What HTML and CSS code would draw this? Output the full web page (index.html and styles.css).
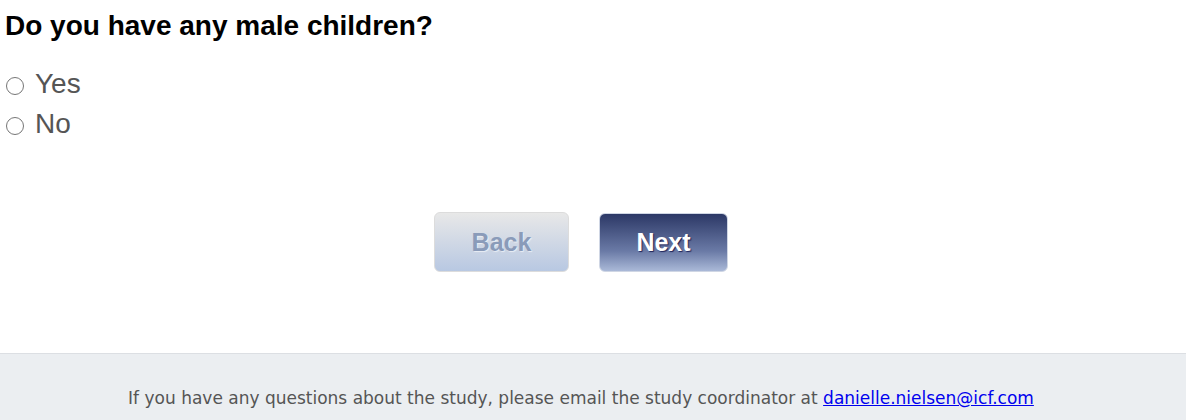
FILE: index.html
```html
<!DOCTYPE html>
<html lang="en">
<head>
<meta charset="utf-8">
<title>Survey</title>
<link rel="stylesheet" href="styles.css">
</head>
<body>
<main class="page">
  <h1 class="question">Do you have any male children?</h1>
  <div class="options">
    <label class="option"><input type="radio" name="male" class="radio"><span>Yes</span></label>
    <label class="option"><input type="radio" name="male" class="radio"><span>No</span></label>
  </div>
  <div class="nav">
    <button class="btn btn-back" type="button">Back</button>
    <button class="btn btn-next" type="button">Next</button>
  </div>
</main>
<footer class="footer">
  <p class="footer-text">If you have any questions about the study, please email the study coordinator at <a href="#" class="mail">danielle.nielsen@icf.com</a></p>
</footer>
</body>
</html>
```
FILE: styles.css
```css
html, body {
  margin: 0;
  padding: 0;
  background: #fff;
}
body {
  font-family: "Liberation Sans", Arial, sans-serif;
}
.page {
  padding: 0 24px 0 5px;
  height: 353px;
  box-sizing: border-box;
  display: flex;
  flex-direction: column;
}
.question {
  margin: 10px 0 0;
  font-size: 28px;
  line-height: 32px;
  font-weight: bold;
  color: #000;
}
.options {
  margin-top: 22px;
  display: flex;
  flex-direction: column;
}
.option {
  display: flex;
  align-items: center;
  gap: 11px;
  font-size: 28px;
  line-height: 40px;
  color: #555;
}
.radio {
  appearance: none;
  -webkit-appearance: none;
  margin: 4px 0 0 1px;
  width: 18px;
  height: 18px;
  border: 1px solid #767676;
  border-radius: 50%;
  box-sizing: border-box;
  background: #fff;
}
.nav {
  margin-top: 68px;
  display: flex;
  justify-content: center;
  gap: 30px;
  padding-right: 5px;
}
.btn {
  font-family: "Liberation Sans", Arial, sans-serif;
  font-size: 25px;
  font-weight: bold;
  border-radius: 6px;
  height: 60px;
  box-sizing: border-box;
  padding: 0;
}
.btn-back {
  width: 135px;
  color: #8a9bb9;
  border: 1px solid #dcdcdc;
  background: linear-gradient(#e8e8e8, #b8c8e2);
  text-shadow: 1px 1px 1px rgba(255,255,255,0.6);
}
.btn-next {
  width: 129px;
  margin-top: 1px;
  height: 59px;
  color: #fff;
  border: 1px solid #cfd6e4;
  background: linear-gradient(#2c3866, #6a7aa6 65%, #aab9d8);
  text-shadow: 1px 1px 1px rgba(0,0,60,0.7);
}
.footer {
  background: #ebeef1;
  border-top: 1px solid #dcdfe3;
  height: 67px;
  box-sizing: border-box;
  padding-right: 24px;
}
.footer-text {
  margin: 0;
  padding-top: 33px;
  text-align: center;
  font-family: "DejaVu Sans", Tahoma, Verdana, sans-serif;
  font-size: 17px;
  line-height: 22px;
  color: #555;
}
.mail {
  color: #0000ee;
  text-decoration: underline;
}
```
